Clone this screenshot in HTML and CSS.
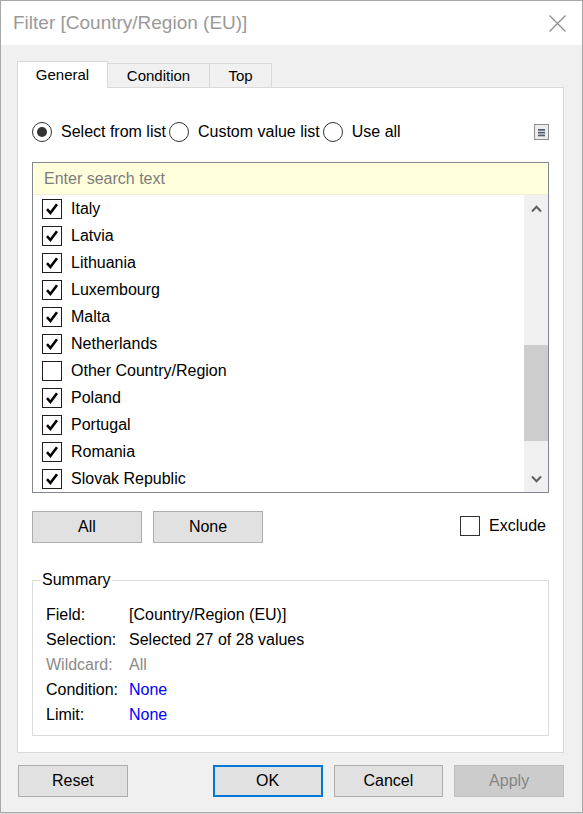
FILE: index.html
```html
<!DOCTYPE html>
<html lang="en">
<head>
<meta charset="utf-8">
<title>Filter [Country/Region (EU)]</title>
<link rel="stylesheet" href="styles.css">
</head>
<body>
<div class="dialog">
  <div class="titlebar">
    <span class="title">Filter [Country/Region (EU)]</span>
    <svg class="close" width="17" height="17" viewBox="0 0 17 17"><path d="M0.5 0.5 L16.5 16.5 M16.5 0.5 L0.5 16.5" stroke="#8a8a8a" stroke-width="1.1" fill="none"/></svg>
  </div>
  <div class="body">
    <div class="tabs">
      <div class="tab active tab-general">General</div>
      <div class="tab tab-condition">Condition</div>
      <div class="tab tab-top">Top</div>
    </div>
    <div class="panel">
      <div class="mode-row">
        <div class="radios">
          <label class="radio"><span class="radio-circle checked"></span>Select from list</label>
          <label class="radio"><span class="radio-circle"></span>Custom value list</label>
          <label class="radio"><span class="radio-circle"></span>Use all</label>
        </div>
        <span class="menu-icon">
          <svg width="15" height="16" viewBox="0 0 15 16"><rect x="0.5" y="0.5" width="14" height="15" fill="#ececec" stroke="#8e8e8e"/><rect x="4" y="5" width="7" height="1.7" fill="#4e5d72"/><rect x="4" y="7.8" width="7" height="1.7" fill="#4e5d72"/><rect x="4" y="10.6" width="7" height="1.7" fill="#4e5d72"/></svg>
        </span>
      </div>
      <div class="listbox">
        <div class="search">Enter search text</div>
        <div class="list-body">
          <ul class="items">
            <li class="item"><span class="cb"><svg class="tick" viewBox="0 0 18 18"><path d="M4 9.2 L7.4 13 L14 4.3" /></svg></span>Italy</li>
            <li class="item"><span class="cb"><svg class="tick" viewBox="0 0 18 18"><path d="M4 9.2 L7.4 13 L14 4.3" /></svg></span>Latvia</li>
            <li class="item"><span class="cb"><svg class="tick" viewBox="0 0 18 18"><path d="M4 9.2 L7.4 13 L14 4.3" /></svg></span>Lithuania</li>
            <li class="item"><span class="cb"><svg class="tick" viewBox="0 0 18 18"><path d="M4 9.2 L7.4 13 L14 4.3" /></svg></span>Luxembourg</li>
            <li class="item"><span class="cb"><svg class="tick" viewBox="0 0 18 18"><path d="M4 9.2 L7.4 13 L14 4.3" /></svg></span>Malta</li>
            <li class="item"><span class="cb"><svg class="tick" viewBox="0 0 18 18"><path d="M4 9.2 L7.4 13 L14 4.3" /></svg></span>Netherlands</li>
            <li class="item"><span class="cb"></span>Other Country/Region</li>
            <li class="item"><span class="cb"><svg class="tick" viewBox="0 0 18 18"><path d="M4 9.2 L7.4 13 L14 4.3" /></svg></span>Poland</li>
            <li class="item"><span class="cb"><svg class="tick" viewBox="0 0 18 18"><path d="M4 9.2 L7.4 13 L14 4.3" /></svg></span>Portugal</li>
            <li class="item"><span class="cb"><svg class="tick" viewBox="0 0 18 18"><path d="M4 9.2 L7.4 13 L14 4.3" /></svg></span>Romania</li>
            <li class="item"><span class="cb"><svg class="tick" viewBox="0 0 18 18"><path d="M4 9.2 L7.4 13 L14 4.3" /></svg></span>Slovak Republic</li>
          </ul>
          <div class="scrollbar">
            <div class="sb-btn"><svg width="11" height="8" viewBox="0 0 11 8"><path d="M1 6.5 L5.5 1.8 L10 6.5" fill="none" stroke="#606060" stroke-width="2"/></svg></div>
            <div class="sb-track"><div class="sb-thumb"></div></div>
            <div class="sb-btn"><svg width="11" height="8" viewBox="0 0 11 8"><path d="M1 1.5 L5.5 6.2 L10 1.5" fill="none" stroke="#606060" stroke-width="2"/></svg></div>
          </div>
        </div>
      </div>
      <div class="btn-row">
        <button class="btn">All</button>
        <button class="btn">None</button>
        <label class="exclude"><span class="cb"></span>Exclude</label>
      </div>
      <fieldset class="summary">
        <legend>Summary</legend>
        <div class="summary-grid">
          <span>Field:</span><span>[Country/Region (EU)]</span>
          <span>Selection:</span><span>Selected 27 of 28 values</span>
          <span class="muted">Wildcard:</span><span class="muted">All</span>
          <span>Condition:</span><span class="link">None</span>
          <span>Limit:</span><span class="link">None</span>
        </div>
      </fieldset>
    </div>
    <div class="footer">
      <button class="btn">Reset</button>
      <button class="btn default push">OK</button>
      <button class="btn">Cancel</button>
      <button class="btn disabled">Apply</button>
    </div>
  </div>
</div>
</body>
</html>
```
FILE: styles.css
```css
* { box-sizing: border-box; }

body {
  margin: 0;
  background: #d8d8d8;
  font-family: "Liberation Sans", Arial, sans-serif;
  font-size: 16px;
  color: #000;
}

.dialog {
  width: 583px;
  height: 813px;
  border: 1px solid #a8a8a8;
  background: #f0f0f0;
  display: flex;
  flex-direction: column;
}

.titlebar {
  height: 44px;
  flex: none;
  background: #fff;
  display: flex;
  align-items: center;
  justify-content: space-between;
  padding: 0 16px 0 12px;
}

.title {
  font-size: 19px;
  color: #999;
}

.close { display: block; }

.body {
  padding: 16px 18px 0 16px;
}

.tabs {
  display: flex;
  align-items: flex-end;
  height: 26px;
}

.tab {
  height: 24px;
  border: 1px solid #d9d9d9;
  border-bottom: none;
  display: flex;
  align-items: center;
  justify-content: center;
  font-size: 15px;
  margin-left: -1px;
  background: #f0f0f0;
}

.tab.active {
  height: 27px;
  margin-left: 0;
  margin-bottom: -1px;
  background: #fff;
  position: relative;
  z-index: 1;
  padding-bottom: 2px;
}

.tab-general { width: 91px; }
.tab-condition { width: 103px; }
.tab-top { width: 63px; }

.panel {
  width: 547px;
  height: 666px;
  background: #fff;
  border: 1px solid #d9d9d9;
  padding: 0 14px;
}

.mode-row {
  margin-top: 34px;
  height: 20px;
  display: flex;
  align-items: center;
  justify-content: space-between;
}

.radios {
  display: flex;
  gap: 3px;
}

.radio {
  display: flex;
  align-items: center;
  gap: 9px;
}

.radio-circle {
  width: 20px;
  height: 20px;
  border: 1px solid #333;
  border-radius: 50%;
  display: flex;
  align-items: center;
  justify-content: center;
  background: #fff;
}

.radio-circle.checked::after {
  content: "";
  width: 10px;
  height: 10px;
  border-radius: 50%;
  background: #333;
}

.menu-icon { display: flex; }

.listbox {
  margin-top: 20px;
  border: 1px solid #828790;
}

.search {
  height: 32px;
  background: #ffffdc;
  border-bottom: 1px solid #efefd8;
  padding-left: 11px;
  color: #7c7c7c;
  display: flex;
  align-items: center;
}

.list-body {
  display: flex;
  height: 297px;
}

.items {
  flex: 1;
  list-style: none;
  margin: 0;
  padding: 0;
}

.item {
  height: 27px;
  display: flex;
  align-items: center;
  gap: 9px;
  padding-left: 9px;
}

.cb {
  width: 20px;
  height: 20px;
  border: 1px solid #1e1e1e;
  background: #fff;
  display: flex;
  align-items: center;
  justify-content: center;
}

.tick {
  width: 18px;
  height: 18px;
}

.tick path {
  fill: none;
  stroke: #000;
  stroke-width: 2.6;
}

.scrollbar {
  width: 24px;
  background: #f0f0f0;
  display: flex;
  flex-direction: column;
}

.sb-btn {
  height: 27px;
  display: flex;
  align-items: center;
  justify-content: center;
}

.sb-btn svg { display: block; }

.sb-track { flex: 1; }

.sb-thumb {
  margin-top: 123px;
  height: 96px;
  background: #cdcdcd;
}

.btn-row {
  margin-top: 18px;
  display: flex;
  align-items: center;
  gap: 11px;
}

.btn {
  width: 110px;
  height: 32px;
  background: #e1e1e1;
  border: 1px solid #adadad;
  font-family: inherit;
  font-size: 16px;
  color: #000;
  padding: 0;
}

.btn.default { border: 2px solid #0078d7; }

.btn.disabled {
  background: #cccccc;
  border-color: #bfbfbf;
  color: #858585;
}

.exclude {
  margin-left: auto;
  margin-right: 3px;
  margin-top: -3px;
  display: flex;
  align-items: center;
  gap: 9px;
}

.exclude .cb {
  width: 20px;
  height: 20px;
  border-color: #333;
}

.summary {
  margin: 28px 0 0;
  padding: 13px 12px 8px 7px;
  border: 1px solid #dcdcdc;
  min-width: 0;
}

.summary legend {
  padding: 0 2px;
  line-height: 18px;
}

.summary-grid {
  margin-left: 6px;
  display: grid;
  grid-template-columns: 83px 1fr;
  grid-auto-rows: 25px;
  align-items: center;
}

.muted { color: #8a8a8a; }
.link { color: #0000ff; }

.footer {
  margin-top: 12px;
  padding-left: 1px;
  display: flex;
  gap: 11px;
}

.footer .push { margin-left: 74px; }
```
